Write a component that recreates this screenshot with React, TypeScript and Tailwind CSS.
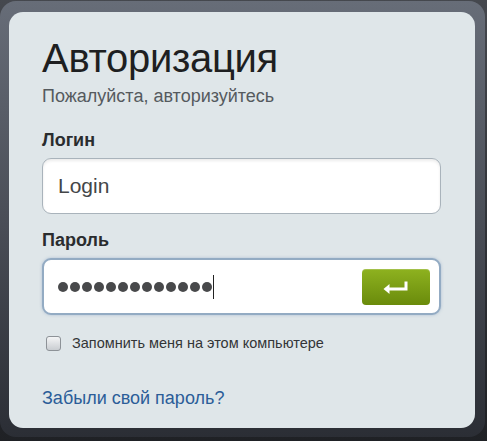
import React from "react";

const font = { fontFamily: '"Liberation Sans", Arial, sans-serif' };

const EnterIcon = () => (
  <svg width="26" height="14" viewBox="0 0 26 14" fill="none">
    <path d="M23 1.5V9H5" stroke="white" strokeWidth="3" strokeLinejoin="miter" />
    <path d="M0.5 9L6.5 4V14L0.5 9Z" fill="white" />
  </svg>
);

export default function App() {
  const dots = Array.from({ length: 13 });
  return (
    <div
      className="w-[487px] h-[441px] bg-gradient-to-b from-[#45484e] to-[#1f2125] pt-[1px]"
      style={font}
    >
      <div className="w-[485px] h-[436px] rounded-[16px] bg-gradient-to-b from-[#676d78] via-[#4a4e57] to-[#2b2e35] pt-[11px] pl-[9px] pr-[10px] pb-[9px]">
        <div className="h-full rounded-[14px] bg-[#dfe6e9] pl-[33px] pr-[34px] pt-[26px]">
          <h1 className="text-[40px] leading-[40px] text-[#1e1f21] tracking-[-0.3px]">Авторизация</h1>
          <p className="mt-[8px] text-[18px] leading-[20px] text-[#555a5e]">Пожалуйста, авторизуйтесь</p>

          <label className="block mt-[24px] text-[18px] leading-[20px] font-bold text-[#2a2c2e]">Логин</label>
          <div className="mt-[8px] h-[56px] rounded-[9px] border border-[#a9b3bb] bg-white shadow-[inset_0_2px_3px_rgba(0,0,0,0.08)] flex items-center pl-[15px]">
            <span className="text-[21px] text-[#444648]">Login</span>
          </div>

          <label className="block mt-[16px] text-[18px] leading-[20px] font-bold text-[#2a2c2e]">Пароль</label>
          <div className="mt-[8px] h-[57px] rounded-[9px] border-2 border-[#93abc3] bg-white shadow-[0_0_3px_rgba(120,150,190,0.5)] flex items-center pl-[14px] pr-[9px]">
            <div className="flex items-center gap-[2px]">
              {dots.map((_, i) => (
                <span key={i} className="w-[10px] h-[10px] rounded-full bg-[#48494b]" />
              ))}
            </div>
            <span className="ml-[1px] w-[1px] h-[24px] bg-[#222]" />
            <button className="ml-auto w-[68px] h-[36px] rounded-[4px] bg-gradient-to-b from-[#8eb21f] to-[#6a8b0b] shadow-[inset_0_1px_0_rgba(255,255,255,0.2)] flex items-center justify-center">
              <EnterIcon />
            </button>
          </div>

          <div className="mt-[18px] flex items-center">
            <span className="ml-[4px] w-[15px] h-[15px] rounded-[3px] border border-[#8d9297] bg-gradient-to-b from-[#f4f5f6] to-[#c9cdd1]" />
            <span className="ml-[11px] text-[14.5px] text-[#333537]">Запомнить меня на этом компьютере</span>
          </div>

          <a className="block mt-[33px] text-[18px] leading-[20px] text-[#2b5d98]">Забыли свой пароль?</a>
        </div>
      </div>
    </div>
  );
}
